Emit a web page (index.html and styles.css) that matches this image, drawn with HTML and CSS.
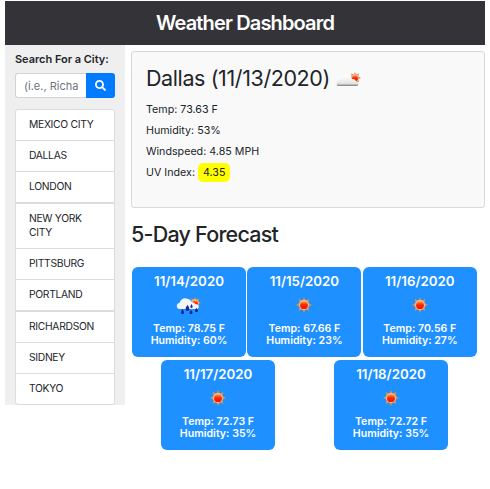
FILE: index.html
```html
<!DOCTYPE html>
<html lang="en">
<head>
<meta charset="utf-8">
<title>Weather Dashboard</title>
<link rel="stylesheet" href="styles.css">
</head>
<body>
<svg class="defs" aria-hidden="true">
  <defs>
    <linearGradient id="cloud" x1="0" y1="0" x2="0" y2="1"><stop offset="0" stop-color="#fff"/><stop offset=".6" stop-color="#ececec"/><stop offset=".8" stop-color="#ddd"/><stop offset="1" stop-color="#777"/></linearGradient>
    <linearGradient id="core" x1="0" y1="0" x2="0" y2="1"><stop offset="0" stop-color="#ff9a45"/><stop offset=".45" stop-color="#ff2808"/><stop offset="1" stop-color="#ee1200"/></linearGradient>
    <symbol id="sun" viewBox="0 0 16 16">
      <path fill="#c99461" d="M8 0l1.500 3.400L13.400 2l-1 3.800L16 8l-3.600 1.800 1 4-3.800-1.300L8 16l-1.600-3.500-3.800 1.300 1-4L0 8l3.600-2.200-1-3.800 3.900 1.400z"/>
      <circle cx="8" cy="8" r="4.900" fill="#f5c28a"/><circle cx="8" cy="8.200" r="3.900" fill="url(#core)"/>
    </symbol>
  </defs>
</svg>
<header class="header"><h1>Weather Dashboard</h1></header>
<div class="layout">
  <aside class="sidebar">
    <label class="search-label" for="city">Search For a City:</label>
    <form class="search">
      <input id="city" type="text" placeholder="(i.e., Richardson)">
      <button type="button" aria-label="Search"><svg viewBox="0 0 512 512"><path fill="#fff" d="M505 442.700 405.300 343c-4.500-4.500-10.600-7-17-7H372c27.600-35.300 44-79.700 44-128C416 93.100 322.900 0 208 0S0 93.100 0 208s93.100 208 208 208c48.300 0 92.700-16.400 128-44v16.300c0 6.400 2.500 12.500 7 17l99.700 99.700c9.400 9.400 24.600 9.400 33.900 0l28.300-28.300c9.400-9.400 9.400-24.600.1-34zM208 336c-70.700 0-128-57.200-128-128 0-70.700 57.200-128 128-128 70.700 0 128 57.200 128 128 0 70.700-57.200 128-128 128z"/></svg></button>
    </form>
    <ul class="cities">
      <li>MEXICO CITY</li><li>DALLAS</li><li>LONDON</li>
      <li class="thick">NEW YORK CITY</li><li>PITTSBURG</li><li>PORTLAND</li>
      <li class="thick">RICHARDSON</li><li>SIDNEY</li><li>TOKYO</li>
    </ul>
  </aside>
  <main class="main">
    <section class="current">
      <h2><span>Dallas (11/13/2020)</span>
        <svg class="current-icon" viewBox="0 0 26 18"><use href="#sun" x="13" y="1" width="12" height="12"/><path fill="url(#cloud)" d="M2 15C-.5 14 .5 9.500 3.500 9 4.500 5.500 9 3 12.500 5c2 0 3 1.500 3.500 3 2-.5 4 1 4 2.500 3 1 3.500 3.500 1 4.500z"/></svg>
      </h2>
      <p>Temp: 73.63 F</p>
      <p>Humidity: 53%</p>
      <p>Windspeed: 4.85 MPH</p>
      <p>UV Index: <span class="uv">4.35</span></p>
    </section>
    <h2 class="forecast-title">5-Day Forecast</h2>
    <div class="forecast">
      <article class="day"><h3>11/14/2020</h3>
        <svg class="rain" viewBox="0 0 26 18"><use href="#sun" x="13" y="0" width="12" height="12"/><path fill="#f4f4fb" d="M3 12C0 11 0 6.500 3.500 6 4.500 1.500 9 0 12 2c2 0 3 2 3.500 3 2 0 3 1 4 2 4 0 4 4 2 5z"/><path fill="#18259a" d="M6.500 12c2 3 2 5 0 5s-2-2 0-5zm5-4c2.500 3 2.500 6 0 6s-2.500-3 0-6zm4-1c1.500 2 1.500 4 0 4s-1.500-2 0-4zm-.5 6c2 2 2 4 0 4s-2-2 0-4zm5.500-2c2 2 2 4 0 4s-2-2 0-4z"/></svg>
        <p>Temp: 78.75 F</p><p>Humidity: 60%</p></article>
      <article class="day"><h3>11/15/2020</h3><svg class="sun"><use href="#sun"/></svg><p>Temp: 67.66 F</p><p>Humidity: 23%</p></article>
      <article class="day"><h3>11/16/2020</h3><svg class="sun"><use href="#sun"/></svg><p>Temp: 70.56 F</p><p>Humidity: 27%</p></article>
    </div>
    <div class="forecast second">
      <article class="day"><h3>11/17/2020</h3><svg class="sun"><use href="#sun"/></svg><p>Temp: 72.73 F</p><p>Humidity: 35%</p></article>
      <article class="day"><h3>11/18/2020</h3><svg class="sun"><use href="#sun"/></svg><p>Temp: 72.72 F</p><p>Humidity: 35%</p></article>
    </div>
  </main>
</div>
</body>
</html>
```
FILE: styles.css
```css
* { box-sizing: border-box; }
body { margin: 0; padding: 1px 5px 0; background: #fff; color: #212529; font-family: Inter, "Liberation Sans", sans-serif; font-size: 11px; }
h1, h2, h3, p { margin: 0; }
svg { display: block; }
.defs { position: absolute; width: 0; height: 0; }
.header { height: 44px; background: #343438; color: #fff; text-align: center; }
.header h1 { font-size: 20px; font-weight: 600; line-height: 44px; letter-spacing: -.85px; }
.layout { display: flex; align-items: flex-start; }
.sidebar { width: 120px; height: 360px; padding: 7px 10px 0; background: #efefef; }
.search-label { display: block; height: 15px; font-size: 11px; font-weight: 600; line-height: 15px; letter-spacing: -.03px; white-space: nowrap; }
.search { display: flex; height: 25px; margin-top: 6px; }
.search input { width: 71px; min-width: 0; padding: 0 8px; border: 1px solid #ced4da; border-right: 0; border-radius: 3px 0 0 3px; background: #fff; font: 11px Inter, sans-serif; }
.search input::placeholder { color: #6c757d; opacity: 1; }
.search button { display: flex; width: 29px; padding: 0; align-items: center; justify-content: center; border: 0; border-radius: 0 3px 3px 0; background: #007bff; }
.search button svg { width: 11px; height: 11px; }
.cities { margin: 11px 0 0; padding: 0; border: 1px solid #dcdcdc; border-radius: 3px; background: #fff; list-style: none; }
.cities li { padding: 7px 13px 9px; font-size: 10.3px; line-height: 14px; letter-spacing: -.3px; }
.cities li + li { border-top: 1px solid #dcdcdc; }
.cities li.thick { border-top-width: 2px; }
.main { width: 354px; margin-left: 6px; padding-top: 6px; }
.current { height: 157px; padding: 12px 14px; border: 1px solid #d8d8d8; border-radius: 3px; background: #f9f9f9; }
.current h2 { display: flex; height: 29px; gap: 6px; align-items: center; font-size: 21.5px; font-weight: 400; line-height: 29px; white-space: nowrap; letter-spacing: -.4px; margin-bottom: 6px; }
.current-icon { width: 26px; height: 18px; margin-top: 3px; }
.current p { font-size: 10.7px; line-height: 21px; }
.uv { padding: 3px 5px; border-radius: 5px; background: #ff0; }
.forecast-title { margin-top: 12px; font-size: 21.5px; font-weight: 500; line-height: 29px; letter-spacing: -.77px; }
.forecast { display: flex; gap: 1.4px; margin: 18px 0 0 1px; }
.forecast.second { gap: 59px; margin: 3px 0 0 30px; }
.day { display: flex; width: 114px; height: 90px; padding-top: 6px; flex-direction: column; align-items: center; border-radius: 6px; background: #1e90ff; color: #fff; }
.day h3 { height: 17px; margin-bottom: 7px; font-size: 13.3px; font-weight: 600; line-height: 17px; }
.day .sun { width: 16px; height: 16px; margin-bottom: 10px; }
.day .rain { width: 26px; height: 18px; margin-bottom: 8px; }
.day p { font-size: 10.6px; font-weight: 600; line-height: 12px; }
```
